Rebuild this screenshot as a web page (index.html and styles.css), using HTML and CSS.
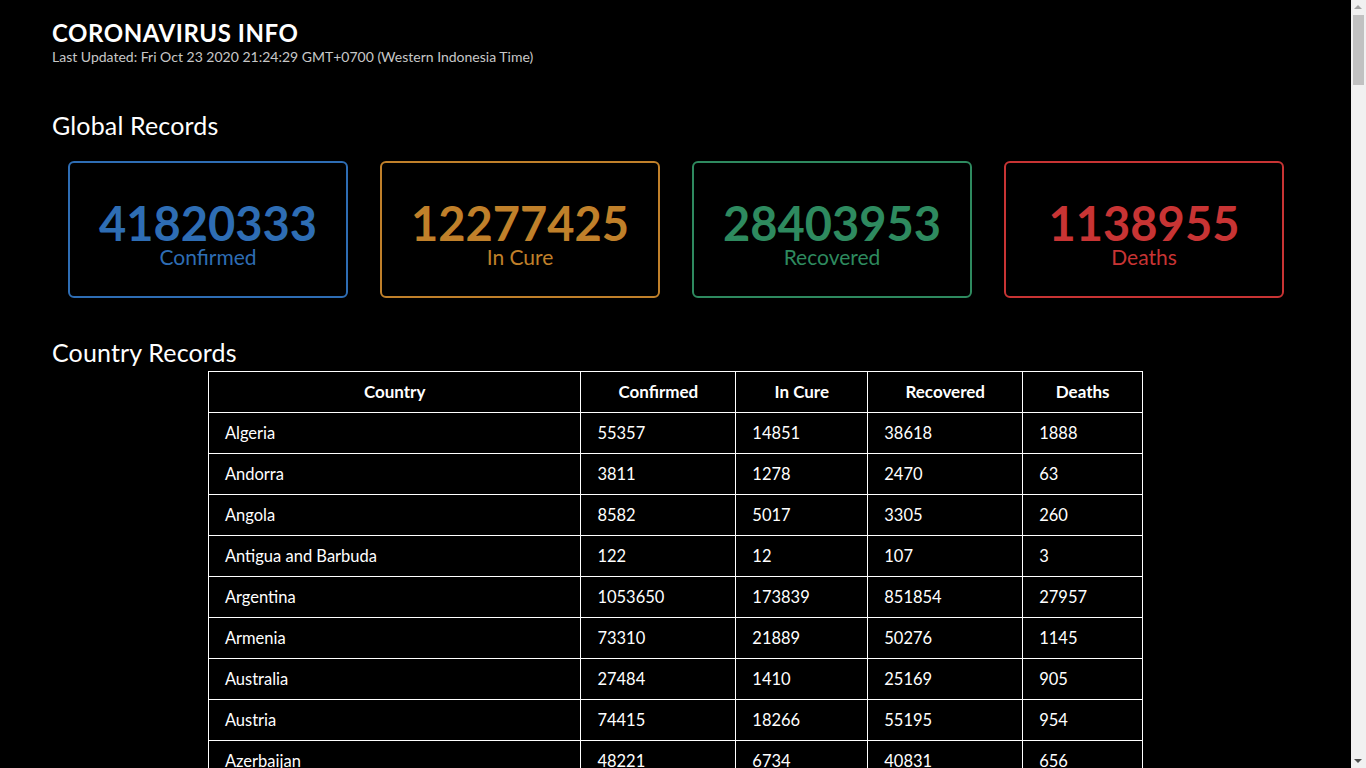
FILE: index.html
```html
<!DOCTYPE html>
<html lang="en">
<head>
<meta charset="utf-8">
<title>Coronavirus Info</title>
<link rel="stylesheet" href="styles.css">
</head>
<body>
<div class="page">
  <header class="top">
    <h1 class="title">CORONAVIRUS INFO</h1>
    <p class="updated">Last Updated: Fri Oct 23 2020 21:24:29 GMT+0700 (Western Indonesia Time)</p>
  </header>

  <h2 class="section-title global-title">Global Records</h2>
  <div class="cards">
    <div class="card card-blue"><span class="card-num">41820333</span><span class="card-label">Confirmed</span></div>
    <div class="card card-orange"><span class="card-num">12277425</span><span class="card-label">In Cure</span></div>
    <div class="card card-green"><span class="card-num">28403953</span><span class="card-label">Recovered</span></div>
    <div class="card card-red"><span class="card-num">1138955</span><span class="card-label">Deaths</span></div>
  </div>

  <h2 class="section-title country-title">Country Records</h2>
  <table class="records">
    <colgroup>
      <col class="c-country"><col class="c-confirmed"><col class="c-cure"><col class="c-recovered"><col class="c-deaths">
    </colgroup>
    <thead>
      <tr><th>Country</th><th>Confirmed</th><th>In Cure</th><th>Recovered</th><th>Deaths</th></tr>
    </thead>
    <tbody>
      <tr><td>Algeria</td><td>55357</td><td>14851</td><td>38618</td><td>1888</td></tr>
      <tr><td>Andorra</td><td>3811</td><td>1278</td><td>2470</td><td>63</td></tr>
      <tr><td>Angola</td><td>8582</td><td>5017</td><td>3305</td><td>260</td></tr>
      <tr><td>Antigua and Barbuda</td><td>122</td><td>12</td><td>107</td><td>3</td></tr>
      <tr><td>Argentina</td><td>1053650</td><td>173839</td><td>851854</td><td>27957</td></tr>
      <tr><td>Armenia</td><td>73310</td><td>21889</td><td>50276</td><td>1145</td></tr>
      <tr><td>Australia</td><td>27484</td><td>1410</td><td>25169</td><td>905</td></tr>
      <tr><td>Austria</td><td>74415</td><td>18266</td><td>55195</td><td>954</td></tr>
      <tr><td>Azerbaijan</td><td>48221</td><td>6734</td><td>40831</td><td>656</td></tr>
      <tr><td>Bahamas</td><td>6198</td><td>2093</td><td>3972</td><td>133</td></tr>
      <tr><td>Bahrain</td><td>78586</td><td>2622</td><td>75657</td><td>307</td></tr>
      <tr><td>Bangladesh</td><td>398815</td><td>77287</td><td>315729</td><td>5799</td></tr>
    </tbody>
  </table>
</div>

<div class="scrollbar" aria-hidden="true">
  <span class="sb-arrow sb-up"></span>
  <span class="sb-thumb"></span>
  <span class="sb-arrow sb-down"></span>
</div>
</body>
</html>
```

FILE: styles.css
```css
html, body {
  margin: 0;
  padding: 0;
  background: #000;
  color: #fff;
  font-family: "Lato", "Noto Sans", sans-serif;
}

.page {
  width: 1351px;
  box-sizing: border-box;
  padding: 18px 52px 40px;
}

.title {
  margin: 0;
  font-size: 24px;
  line-height: 30px;
  font-weight: 700;
  color: #fff;
  letter-spacing: 0.55px;
}

.updated {
  margin: 0;
  font-size: 14px;
  line-height: 18px;
  color: #c8c8c8;
}

.section-title {
  margin: 0;
  font-size: 25px;
  line-height: 30px;
  font-weight: 400;
  color: #fff;
  letter-spacing: 0.15px;
}

.global-title {
  margin-top: 44px;
}

.cards {
  display: grid;
  grid-template-columns: repeat(4, 280px);
  gap: 32px;
  padding: 0 0 0 16px;
  margin-top: 21px;
}

.card {
  height: 137px;
  box-sizing: border-box;
  border: 2px solid;
  border-radius: 6px;
  display: flex;
  flex-direction: column;
  align-items: center;
  justify-content: center;
  padding-top: 8px;
}

.card-num {
  font-size: 47px;
  line-height: 46px;
  font-weight: 700;
}

.card-label {
  font-size: 21px;
  line-height: 22px;
}

.card-blue { border-color: #2e6db4; color: #2e6db4; }
.card-orange { border-color: #c0802a; color: #c0802a; }
.card-green { border-color: #2e8a5f; color: #2e8a5f; }
.card-red { border-color: #c83434; color: #c83434; }

.country-title {
  margin-top: 39px;
}

.records {
  width: 75%;
  margin: 4px auto 0;
  border-collapse: collapse;
  font-size: 16.5px;
  color: #fff;
}

.c-country { width: 373px; }
.c-confirmed { width: 155px; }
.c-cure { width: 132px; }
.c-recovered { width: 155px; }
.c-deaths { width: 120px; }

.records th,
.records td {
  border: 1px solid #fff;
  box-sizing: border-box;
  padding: 0 16px;
  line-height: 22px;
}

.records th {
  height: 41px;
  font-size: 17px;
  font-weight: 700;
  text-align: center;
}

.records td {
  height: 41px;
  text-align: left;
}

/* imitation of the browser scrollbar seen in the reference */
.scrollbar {
  position: fixed;
  top: 0;
  right: 0;
  width: 15px;
  height: 100vh;
  background: #f1f1f1;
}

.sb-thumb {
  position: absolute;
  left: 2px;
  top: 15px;
  width: 11px;
  height: 70px;
  background: #c1c1c1;
}

.sb-arrow {
  position: absolute;
  left: 3px;
  width: 0;
  height: 0;
  border-left: 4px solid transparent;
  border-right: 4px solid transparent;
}

.sb-up {
  top: 5px;
  border-bottom: 4px solid #a3a3a3;
}

.sb-down {
  bottom: 5px;
  border-top: 4px solid #505050;
}
```
